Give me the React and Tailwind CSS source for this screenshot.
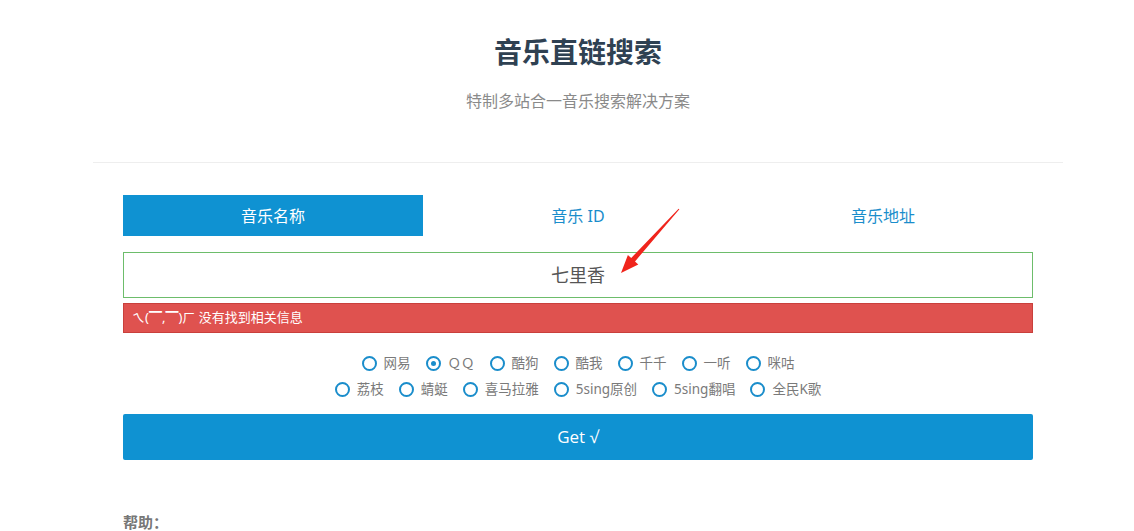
import React from "react";

const row1 = ["网易", "ＱＱ", "酷狗", "酷我", "千千", "一听", "咪咕"];
const row2 = ["荔枝", "蜻蜓", "喜马拉雅", "5sing原创", "5sing翻唱", "全民K歌"];

function Radio({ label, checked }) {
  return (
    <label className="flex items-center gap-[7px]">
      <span className="flex h-[15px] w-[15px] items-center justify-center rounded-full border-[2.5px] border-[#1a8dcb] bg-white">
        {checked && <span className="h-[5px] w-[5px] rounded-full bg-[#1a8dcb]" />}
      </span>
      <span className="text-[13.5px] leading-[26px] text-[#7a7a7a]">{label}</span>
    </label>
  );
}

export default function App() {
  return (
    <div className="relative min-h-[531px] w-[1134px] overflow-hidden bg-white font-['Noto_Sans','Noto_Sans_CJK_SC',sans-serif]">
      <div className="ml-[93px] w-[970px]">
        <div className="pt-[32px] pb-[49px] text-center">
          <h1 className="text-[28px] font-bold leading-[40px] text-[#2f4152]">音乐直链搜索</h1>
          <p className="mt-[17px] text-[16px] leading-[24px] text-[#8a8a8a]">特制多站合一音乐搜索解决方案</p>
        </div>
        <div className="border-t border-[#eeeeee]" />
        <div className="px-[30px] pt-[32px]">
          <div className="grid grid-cols-3 gap-[5px]">
            <div className="flex h-[41px] items-center justify-center bg-[#0f92d2] text-[16px] text-white">音乐名称</div>
            <div className="flex h-[41px] items-center justify-center text-[16px] text-[#1a8dcb]">音乐 ID</div>
            <div className="flex h-[41px] items-center justify-center text-[16px] text-[#1a8dcb]">音乐地址</div>
          </div>
          <div className="mt-[16px] flex h-[46px] items-center justify-center border border-[#6dbd6b] text-[18px] text-[#555555]">
            七里香
          </div>
          <div className="mt-[5px] flex h-[30px] items-center border border-[#c9403c] bg-[#df524f] px-[8px] text-[13px] text-white">
            ㄟ(▔,▔)ㄏ 没有找到相关信息
          </div>
          <div className="mt-[17px] flex flex-col items-center">
            <div className="flex items-center gap-[15px]">
              {row1.map((l) => (
                <Radio key={l} label={l} checked={l === "ＱＱ"} />
              ))}
            </div>
            <div className="flex items-center gap-[15px]">
              {row2.map((l) => (
                <Radio key={l} label={l} />
              ))}
            </div>
          </div>
          <button className="mt-[12px] flex h-[46px] w-full items-center justify-center rounded-[2px] bg-[#0f92d2] font-['Open_Sans',sans-serif] text-[17px] text-white">
            Get √
          </button>
          <div className="mt-[50px] text-[15px] font-bold leading-[24px] text-[#777777]">帮助：</div>
        </div>
      </div>
      <svg className="absolute left-[600px] top-[200px]" width="90" height="80" viewBox="0 0 90 80">
        <polygon
          points="21,73 27.9,55 31.2,58 78.6,8.7 79.4,9.3 35,61.4 38.3,64.4"
          fill="#f0241c"
        />
      </svg>
    </div>
  );
}
